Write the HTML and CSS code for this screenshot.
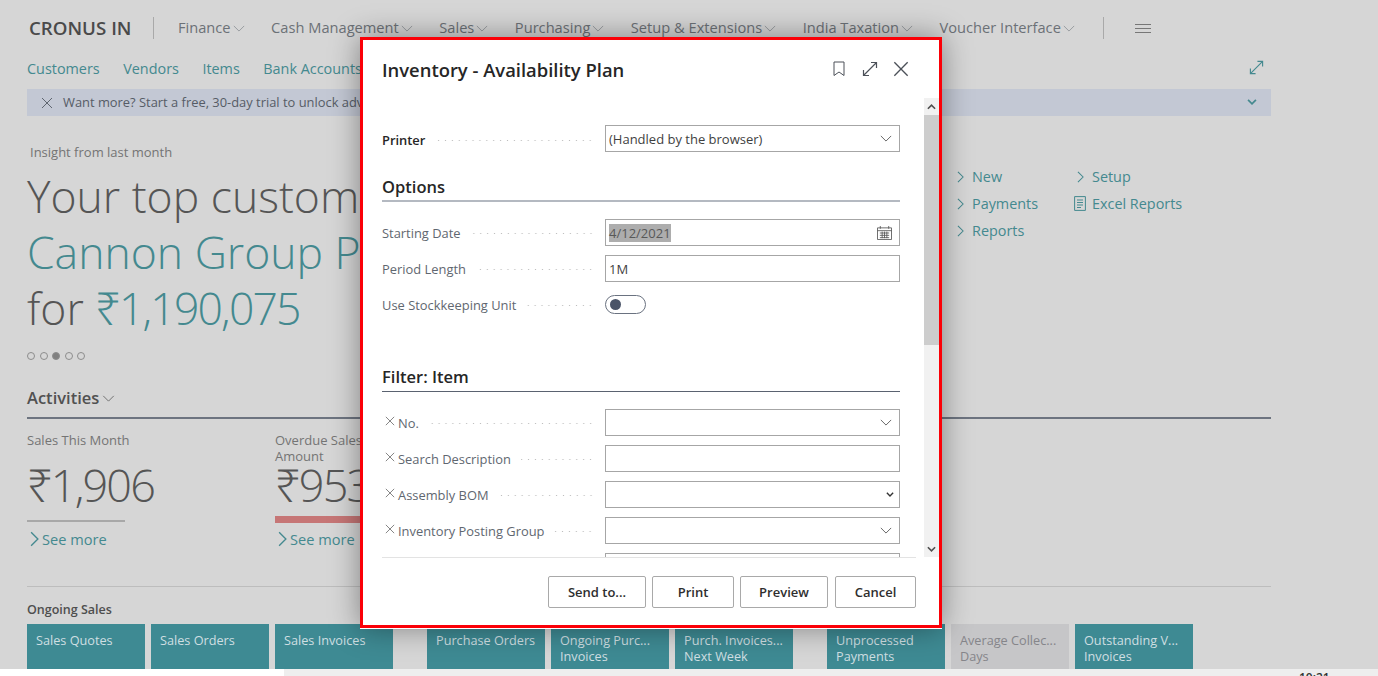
FILE: index.html
```html
<!DOCTYPE html>
<html lang="en">

<head>
	<meta charset="UTF-8">
	<title>Inventory - Availability Plan</title>
	<link rel="stylesheet" href="styles.css">
</head>

<body>
	<svg class="sprite" xmlns="http://www.w3.org/2000/svg">
		<symbol id="chev-down" viewBox="0 0 14 8"><path d="M1 1l6 6 6-6" fill="none" stroke="currentColor" stroke-width="1" /></symbol>
		<symbol id="chev-bold" viewBox="0 0 14 8"><path d="M1.500 1l5.500 5.500L12.500 1" fill="none" stroke="currentColor" stroke-width="2.400" /></symbol>
		<symbol id="chev-right" viewBox="0 0 8 14"><path d="M1 1l6 6-6 6" fill="none" stroke="currentColor" stroke-width="1.200" /></symbol>
		<symbol id="cross" viewBox="0 0 12 12"><path d="M1 1l10 10M11 1L1 11" fill="none" stroke="currentColor" stroke-width="1" /></symbol>
		<symbol id="expand" viewBox="0 0 16 16"><path d="M1.500 14.500L14.500 1.500M9 1.500h5.500V7M1.500 9v5.500H7" fill="none" stroke="currentColor" stroke-width="1.200" /></symbol>
	</svg>

	<div class="page">
		<header class="topnav">
			<div class="company">CRONUS IN</div>
			<nav class="menu">
				<a>Finance<svg class="chev"><use href="#chev-down" /></svg></a>
				<a>Cash Management<svg class="chev"><use href="#chev-down" /></svg></a>
				<a>Sales<svg class="chev"><use href="#chev-down" /></svg></a>
				<a>Purchasing<svg class="chev"><use href="#chev-down" /></svg></a>
				<a>Setup &amp; Extensions<svg class="chev"><use href="#chev-down" /></svg></a>
				<a>India Taxation<svg class="chev"><use href="#chev-down" /></svg></a>
				<a>Voucher Interface<svg class="chev"><use href="#chev-down" /></svg></a>
			</nav>
			<div class="hamburger"><span></span><span></span><span></span></div>
		</header>

		<div class="subnav">
			<a>Customers</a>
			<a>Vendors</a>
			<a>Items</a>
			<a>Bank Accounts</a>
			<svg class="expand-page"><use href="#expand" /></svg>
		</div>

		<div class="banner">
			<svg class="banner-x"><use href="#cross" /></svg>
			<span>Want more? Start a free, 30-day trial to unlock adv</span>
			<svg class="banner-chev"><use href="#chev-bold" /></svg>
		</div>

		<section class="hero">
			<div class="headline">
				<div class="insight">Insight from last month</div>
				<h1>Your top custom<br><em>Cannon Group P</em><br>for <em class="amount">₹1,190,075</em></h1>
				<div class="dots">
					<i></i><i></i><i class="on"></i><i></i><i></i>
				</div>
			</div>
			<div class="actions">
				<a><svg class="arrow"><use href="#chev-right" /></svg>New</a>
				<a><svg class="arrow"><use href="#chev-right" /></svg>Setup</a>
				<a><svg class="arrow"><use href="#chev-right" /></svg>Payments</a>
				<a class="report">
					<svg class="sheet" viewBox="0 0 12 15">
						<path d="M.6.6h10.800v13.800H.6zM3 4h6M3 6.500h6M3 9h6M3 11.500h4" fill="none" stroke="currentColor" />
					</svg>Excel Reports
				</a>
				<a><svg class="arrow"><use href="#chev-right" /></svg>Reports</a>
			</div>
		</section>

		<section class="activities">
			<h2>Activities<svg class="chev"><use href="#chev-down" /></svg></h2>
			<div class="cues">
				<div class="cue">
					<div class="cue-label">Sales This Month</div>
					<div class="cue-value">₹1,906</div>
					<div class="cue-bar"></div>
					<a class="more"><svg><use href="#chev-right" /></svg>See more</a>
				</div>
				<div class="cue">
					<div class="cue-label">Overdue Sales<br>Amount</div>
					<div class="cue-value tight">₹953</div>
					<div class="cue-bar alert"></div>
					<a class="more"><svg><use href="#chev-right" /></svg>See more</a>
				</div>
			</div>
		</section>

		<section class="ongoing">
			<h3>Ongoing Sales</h3>
			<div class="tiles">
				<div class="tile-group">
					<div class="tile">Sales Quotes</div>
					<div class="tile">Sales Orders</div>
					<div class="tile">Sales Invoices</div>
				</div>
				<div class="tile-group">
					<div class="tile">Purchase Orders</div>
					<div class="tile">Ongoing Purc...<br>Invoices</div>
					<div class="tile">Purch. Invoices...<br>Next Week</div>
				</div>
				<div class="tile-group">
					<div class="tile">Unprocessed<br>Payments</div>
					<div class="tile muted">Average Collec...<br>Days</div>
					<div class="tile">Outstanding V...<br>Invoices</div>
				</div>
			</div>
		</section>
		<div class="statusbar"><span class="status-left"></span><span class="status-time">10:21</span></div>
	</div>

	<!-- request page dialog -->
	<div class="dialog">
		<div class="dialog-head">
			<div class="dialog-title">Inventory - Availability Plan</div>
			<div class="dialog-icons">
				<svg class="ico-mark" viewBox="0 0 12 16"><path d="M1 1h10v13.500L6 11l-5 3.500z" fill="none" stroke="currentColor" /></svg>
				<svg class="ico-expand"><use href="#expand" /></svg>
				<svg class="ico-close"><use href="#cross" /></svg>
			</div>
		</div>

		<div class="dialog-body">
			<div class="form">
				<div class="row printer">
					<label class="strong">Printer<span class="leader"></span></label>
					<div class="field">(Handled by the browser)<svg class="drop"><use href="#chev-down" /></svg></div>
				</div>

				<h4 class="group options">Options</h4>
				<div class="row">
					<label>Starting Date<span class="leader"></span></label>
					<div class="field"><span class="selected">4/12/2021</span>
						<svg class="calendar" viewBox="0 0 16 15">
							<path d="M.5 2h15v12.500H.5zM.5 5h15M3.500 0v3M12.500 0v3M3 7.500h10M3 10h10M3 12.500h10M5.500 6v7M8 6v7M10.500 6v7" fill="none" stroke="currentColor" stroke-width=".9" />
						</svg>
					</div>
				</div>
				<div class="row">
					<label>Period Length<span class="leader"></span></label>
					<div class="field">1M</div>
				</div>
				<div class="row">
					<label>Use Stockkeeping Unit<span class="leader"></span></label>
					<div class="toggle"><span></span></div>
				</div>

				<h4 class="group filter">Filter: Item</h4>
				<div class="row">
					<label><svg class="clear"><use href="#cross" /></svg>No.<span class="leader"></span></label>
					<div class="field"><svg class="drop"><use href="#chev-down" /></svg></div>
				</div>
				<div class="row">
					<label><svg class="clear"><use href="#cross" /></svg>Search Description<span class="leader"></span></label>
					<div class="field"></div>
				</div>
				<div class="row">
					<label><svg class="clear"><use href="#cross" /></svg>Assembly BOM<span class="leader"></span></label>
					<div class="field"><svg class="drop-small"><use href="#chev-bold" /></svg></div>
				</div>
				<div class="row">
					<label><svg class="clear"><use href="#cross" /></svg>Inventory Posting Group<span class="leader"></span></label>
					<div class="field"><svg class="drop"><use href="#chev-down" /></svg></div>
				</div>
				<div class="row">
					<label></label>
					<div class="field"></div>
				</div>
			</div>
			<div class="scrollbar">
				<div class="scroll-btn"><svg viewBox="0 0 10 6"><path d="M1 5l4-4 4 4" fill="none" stroke="currentColor" stroke-width="1.800" /></svg></div>
				<div class="scroll-thumb"></div>
				<div class="scroll-track"></div>
				<div class="scroll-btn"><svg viewBox="0 0 10 6"><path d="M1 1l4 4 4-4" fill="none" stroke="currentColor" stroke-width="1.800" /></svg></div>
			</div>
		</div>

		<div class="dialog-foot">
			<button class="send">Send to...</button>
			<button class="print">Print</button>
			<button class="preview">Preview</button>
			<button class="cancel">Cancel</button>
		</div>
	</div>
</body>

</html>
```

FILE: styles.css
```css
* {
	margin: 0;
	padding: 0;
	box-sizing: border-box;
}

:root {
	--backdrop: #d6d6d6;
	--teal: #44898f;
	--tile: #3e8a93;
	--ink: #505050;
	--nav: #6c7177;
	--rule: #6d7480;
	--field: #a6a6a6;
	--label: #5f6770;
}

html,
body {
	height: 676px;
	overflow: hidden;
}

body {
	background: var(--backdrop);
	color: var(--ink);
	font-family: "Open Sans", "Noto Sans", sans-serif;
	font-size: 14px;
}

.sprite {
	display: none;
}

.page {
	height: 676px;
	display: flex;
	flex-direction: column;
	padding: 0 107px 0 27px;
}

svg {
	display: inline-block;
}

a {
	color: inherit;
}

/* top navigation */
.topnav {
	height: 56px;
	display: flex;
	align-items: center;
	white-space: nowrap;
}

.company {
	width: 127px;
	height: 22px;
	padding-left: 2px;
	line-height: 22px;
	font-size: 18.700px;
	font-weight: 600;
	color: #4a4a4a;
	border-right: 1px solid #a9a9a9;
}

.menu {
	display: flex;
	margin: -2px 0 0 24px;
	gap: 26.500px;
	font-size: 14.650px;
	color: var(--nav);
}

.menu a {
	display: flex;
	align-items: center;
}

.chev {
	width: 12px;
	height: 7px;
	margin: 2px 0 0 2px;
	color: #8f9398;
}

.hamburger {
	margin-left: 28px;
	padding-left: 31px;
	height: 22px;
	border-left: 1px solid #a9a9a9;
	display: flex;
	flex-direction: column;
	justify-content: center;
	gap: 3px;
}

.hamburger span {
	display: block;
	width: 16px;
	height: 1px;
	background: #777;
}

/* links under the navigation */
.subnav {
	height: 25px;
	display: flex;
	align-items: center;
	gap: 23.500px;
	color: var(--teal);
	font-size: 14.400px;
	white-space: nowrap;
}

.expand-page {
	width: 15px;
	height: 15px;
	margin: -2px 7px 0 auto;
	color: var(--teal);
}

.banner {
	height: 27px;
	margin-top: 8px;
	padding: 0 14px;
	display: flex;
	align-items: center;
	background: #c3c8d4;
	color: #565c66;
	font-size: 12.900px;
	white-space: nowrap;
}

.banner span {
	margin-top: -2px;
}

.banner-x {
	width: 12px;
	height: 12px;
	margin-right: 10px;
	color: #5f6670;
}

.banner-chev {
	width: 10px;
	height: 6px;
	margin: -1px 0 0 auto;
	color: var(--teal);
}

/* headline */
.hero {
	display: flex;
	margin-top: 27px;
	height: 261px;
}

.headline {
	width: 930px;
	white-space: nowrap;
}

.insight {
	padding-left: 3px;
	font-size: 13px;
	line-height: 18px;
	color: #747474;
}

h1 {
	margin-top: 7px;
	font-size: 44.500px;
	font-weight: 300;
	line-height: 56px;
	color: #555;
}

h1 em {
	font-style: normal;
	color: var(--teal);
}

h1 .amount {
	letter-spacing: -1.800px;
}

.dots {
	display: flex;
	gap: 4.500px;
	margin-top: 16px;
}

.dots i {
	width: 8px;
	height: 8px;
	border: 1px solid #8d8d8d;
	border-radius: 50%;
}

.dots i.on {
	background: #808080;
}

.actions {
	display: grid;
	grid-template-columns: 120px 130px;
	grid-auto-rows: 27px;
	align-content: start;
	margin-top: 20px;
	color: var(--teal);
	font-size: 14.400px;
}

.actions a {
	display: flex;
	align-items: center;
	white-space: nowrap;
}

.arrow {
	width: 7px;
	height: 12px;
	margin-right: 8px;
}

.report {
	margin-left: -3px;
}

.sheet {
	width: 12px;
	height: 15px;
	margin-right: 6px;
}

/* activity cues */
.activities {
	margin-top: -25px;
}

.activities h2 {
	display: flex;
	align-items: center;
	height: 40px;
	padding-bottom: 2px;
	font-size: 16.500px;
	font-weight: 600;
	color: #515151;
	border-bottom: 2px solid var(--rule);
}

.activities h2 .chev {
	width: 13px;
	height: 7px;
	margin: 2px 0 0 3px;
	color: #666;
}

.cues {
	display: flex;
	padding-top: 13px;
	height: 168px;
	border-bottom: 1px solid #bdbdbd;
}

.cue {
	width: 248px;
	white-space: nowrap;
}

.cue-label {
	font-size: 13px;
	line-height: 16px;
	color: #747474;
}

.cue-value {
	height: 50px;
	margin-top: 7px;
	font-size: 45px;
	font-weight: 300;
	line-height: 60px;
	letter-spacing: -1.850px;
	color: #555;
}

.cue-value.tight {
	margin-top: -9px;
}

.cue-bar {
	width: 98px;
	height: 2px;
	margin-top: 15px;
	background: #a8a8a8;
}

.cue-bar.alert {
	width: 90px;
	height: 7px;
	margin: 11px 0 -1px;
	background: #c67676;
}

.more {
	display: flex;
	align-items: center;
	margin-top: 7px;
	padding-left: 3px;
	color: var(--teal);
	font-size: 14.600px;
	line-height: 20px;
}

.more svg {
	width: 9px;
	height: 16px;
	margin-right: 3px;
}

/* ongoing sales tiles */
.ongoing {
	margin-top: 14px;
}

.ongoing h3 {
	font-size: 12.500px;
	font-weight: 600;
	line-height: 18px;
	color: #4e4e4e;
}

.tiles {
	display: flex;
	gap: 34px;
	margin-top: 5px;
}

.tile-group {
	display: flex;
	gap: 6px;
}

.tile {
	width: 118px;
	height: 45px;
	padding: 8px 9px 0;
	background: var(--tile);
	color: #cfdfe2;
	font-size: 12.700px;
	line-height: 16px;
	white-space: nowrap;
	overflow: hidden;
}

.tile.muted {
	background: #c6c6c8;
	color: #85858a;
}

.statusbar {
	height: 7px;
	flex-shrink: 0;
	margin: 0 -107px 0 -27px;
	display: flex;
	background: #eeeeee;
	overflow: hidden;
}

.status-left {
	width: 284px;
	height: 7px;
	background: #fff;
}

.status-time {
	margin: 2px 0 0 1015px;
	font-size: 12px;
	line-height: 14px;
	font-weight: 600;
	color: #333;
}

/* request page dialog */
.dialog {
	position: absolute;
	left: 360px;
	top: 37px;
	width: 582px;
	height: 591px;
	display: flex;
	flex-direction: column;
	background: #fff;
	border: 3px solid #fb0007;
	box-shadow: 0 1px 0 #fff, 0 0 28px rgba(0, 0, 0, 0.4);
	color: #222;
}

.dialog-head {
	height: 58px;
	padding: 0 30px 0 19px;
	flex-shrink: 0;
	display: flex;
	align-items: center;
	justify-content: space-between;
}

.dialog-title {
	font-size: 18.400px;
	font-weight: 600;
	color: #262626;
}

.dialog-icons {
	display: flex;
	align-items: center;
	gap: 16px;
	color: #4c5159;
}

.ico-mark {
	width: 12px;
	height: 16px;
}

.ico-expand {
	width: 16px;
	height: 16px;
	margin-left: 1px;
}

.ico-close {
	width: 16px;
	height: 16px;
	margin-left: -1px;
}

.dialog-body {
	height: 459px;
	flex-shrink: 0;
	display: flex;
	padding-left: 19px;
	overflow: hidden;
}

.form {
	width: 518px;
	height: 459px;
	overflow: hidden;
	padding-top: 27px;
	font-size: 12.900px;
}

.row {
	display: flex;
	height: 27px;
	margin-bottom: 9px;
	flex-shrink: 0;
}

.row label {
	width: 223px;
	padding-right: 11px;
	display: flex;
	align-items: center;
	color: var(--label);
	white-space: nowrap;
}

.row label.strong {
	padding-top: 2px;
	font-weight: 600;
	color: #262626;
}

.leader {
	flex: 1;
	min-width: 0;
	height: 3px;
	margin: 2px 0 0 10px;
	background-image: radial-gradient(circle, #bdbdbd 0.8px, transparent 1px);
	background-size: 6.900px 3px;
	background-position: right center;
}

.clear {
	width: 10px;
	height: 10px;
	margin: -3px 3px 0 3px;
	color: #6d6d6d;
	flex-shrink: 0;
}

.field {
	width: 295px;
	height: 27px;
	padding-left: 3px;
	display: flex;
	align-items: center;
	border: 1px solid var(--field);
	color: #3f3f3f;
	font-size: 13px;
}

.drop {
	width: 12px;
	height: 7px;
	margin-left: auto;
	margin-right: 7px;
	color: #4f4f4f;
}

.drop-small {
	width: 8px;
	height: 5px;
	margin-left: auto;
	margin-right: 5px;
	color: #333;
}

.selected {
	background: #adadad;
	color: #585858;
	line-height: 18px;
}

.calendar {
	width: 15px;
	height: 14px;
	margin-left: auto;
	margin-right: 7px;
	color: #555;
}

.toggle {
	width: 41px;
	height: 19px;
	margin-top: 4px;
	border: 1px solid #6a7280;
	border-radius: 10px;
	padding: 3px 0 0 4px;
}

.toggle span {
	display: block;
	width: 11px;
	height: 11px;
	border-radius: 50%;
	background: #4a5468;
}

.group {
	font-size: 16.500px;
	font-weight: 600;
	color: #262626;
}

.group.options {
	height: 30px;
	line-height: 30px;
	margin: 20px 0 17px;
	border-bottom: 2px solid #b4b9c1;
}

.group.filter {
	height: 29px;
	line-height: 28px;
	margin: 45px 0 17px;
	border-bottom: 1px solid #5a6270;
}

.scrollbar {
	width: 15px;
	height: 459px;
	margin-left: 24px;
	flex-shrink: 0;
	display: flex;
	flex-direction: column;
	color: #505050;
}

.scroll-btn {
	height: 17px;
	background: #f1f1f1;
	display: flex;
	align-items: center;
	justify-content: center;
}

.scroll-btn svg {
	width: 9px;
	height: 6px;
}

.scroll-thumb {
	height: 230px;
	background: #cdcdcd;
}

.scroll-track {
	flex: 1;
	background: #f1f1f1;
}

.dialog-foot {
	flex: 1;
	margin: 0 23px 0 19px;
	border-top: 1px solid #e3e3e3;
	display: flex;
	justify-content: flex-end;
	padding-top: 18px;
	gap: 6px;
}

button {
	height: 32px;
	background: #fff;
	border: 1px solid #a9a9a9;
	border-radius: 2px;
	font-family: inherit;
	font-size: 13px;
	font-weight: 600;
	color: #2e2e2e;
}

.send {
	width: 98px;
}

.print {
	width: 82px;
}

.preview {
	width: 88px;
}

.cancel {
	width: 81px;
	margin-left: 1px;
}
```
